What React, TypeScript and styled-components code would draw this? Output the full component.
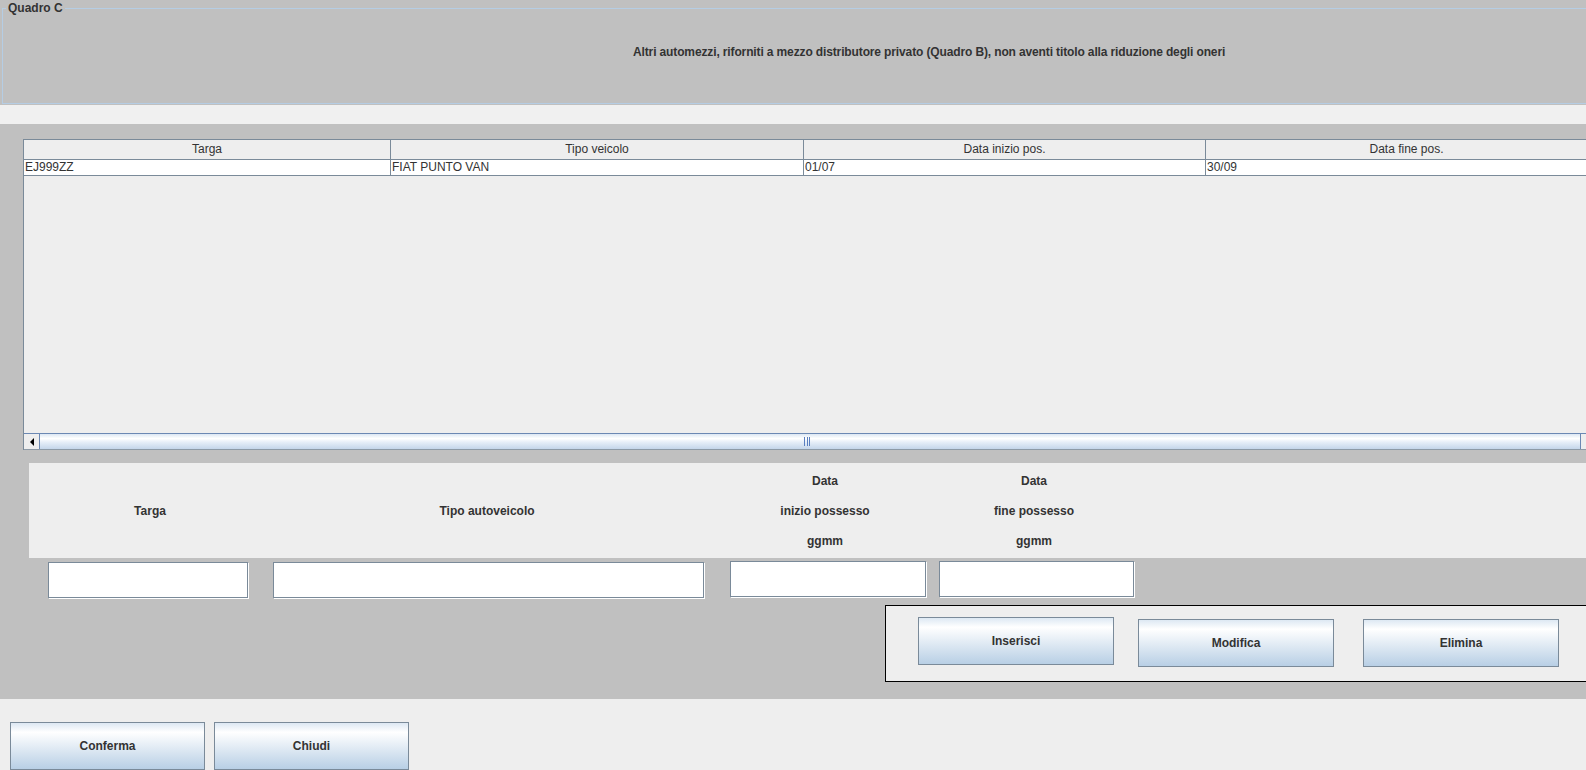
import styled, { createGlobalStyle } from "styled-components";

const GlobalStyle = createGlobalStyle`
  html, body {
    margin: 0;
    padding: 0;
    background: #c0c0c0;
    overflow: hidden;
  }
  * {
    box-sizing: border-box;
  }
`;

const FONT = `"Liberation Sans", Arial, sans-serif`;

const Window = styled.div`
  width: 1586px;
  height: 770px;
  overflow: hidden;
  display: flex;
  flex-direction: column;
  font-family: ${FONT};
  font-size: 12px;
  color: #333333;
`;

const TopPanel = styled.div`
  height: 105px;
  background: #c0c0c0;
  padding: 1px 0 0 2px;
`;

const Frame = styled.fieldset`
  margin: 0;
  padding: 0;
  height: 103px;
  width: 1620px;
  border: 1px solid #b5cde4;
  border-right: none;
`;

const Legend = styled.legend`
  font-weight: bold;
  font-size: 12px;
  line-height: 14px;
  padding: 0 2px;
  margin-left: 3px;
  color: #333333;
`;

const Subtitle = styled.div`
  font-weight: bold;
  line-height: 14px;
  padding: 30px 0 0 630px;
  letter-spacing: -0.13px;
`;

const Band = styled.div`
  height: 19px;
  background: #f0f0f0;
`;

const Main = styled.div`
  height: 575px;
  background: #c0c0c0;
  padding-top: 15px;
  display: flex;
  flex-direction: column;
`;

const TableBox = styled.div`
  margin-left: 23px;
  width: 1576px;
  height: 311px;
  border-left: 1px solid #7a8a99;
  border-top: 1px solid #7a8a99;
  background: #eeeeee;
  display: flex;
  flex-direction: column;
`;

const Grid = styled.div<{ $head?: boolean }>`
  display: grid;
  grid-template-columns: 367px 413px 402px 402px;
  height: ${(p) => (p.$head ? "20px" : "16px")};
  background: ${(p) => (p.$head ? "#eeeeee" : "#ffffff")};
  border-bottom: 1px solid #7a8a99;
`;

const Cell = styled.div<{ $head?: boolean }>`
  border-right: 1px solid #7a8a99;
  line-height: ${(p) => (p.$head ? "19px" : "15px")};
  text-align: ${(p) => (p.$head ? "center" : "left")};
  padding-left: ${(p) => (p.$head ? "0" : "1px")};
  white-space: nowrap;
  overflow: hidden;
`;

const Viewport = styled.div`
  flex: 1;
  background: #eeeeee;
`;

const ScrollBar = styled.div`
  height: 17px;
  display: flex;
  border-top: 1px solid #6b88b3;
  border-bottom: 1px solid #8d9aa6;
  background: #eeeeee;
`;

const ArrowButton = styled.div`
  width: 16px;
  display: flex;
  align-items: center;
  justify-content: center;
  background: #eeeeee;
  border-right: 1px solid #6b88b3;
`;

const Thumb = styled.div`
  flex: 1;
  margin-right: 2px;
  border-right: 1px solid #6b88b3;
  background: linear-gradient(
    to bottom,
    #dce7f3 0%,
    #ffffff 30%,
    #e6eef8 55%,
    #c4d6ea 100%
  );
  display: flex;
  align-items: center;
  justify-content: center;
  padding-right: 6px;
`;

const Grip = styled.div`
  width: 6px;
  height: 9px;
  display: flex;
  justify-content: space-between;
  & > span {
    width: 1px;
    background: #5a7fc0;
  }
`;

const LabelPanel = styled.div`
  margin: 13px 0 0 29px;
  height: 95px;
  background: #eeeeee;
  display: flex;
  align-items: center;
`;

const Label = styled.div<{ $w: number; $ml: number }>`
  width: ${(p) => p.$w}px;
  margin-left: ${(p) => p.$ml}px;
  display: flex;
  flex-direction: column;
  align-items: center;
  font-weight: bold;
  line-height: 30px;
  white-space: nowrap;
`;

const InputRow = styled.div`
  display: flex;
  align-items: flex-start;
  margin: 3px 0 0 29px;
  height: 44px;
`;

const Input = styled.input<{ $w: number; $ml: number; $top: number }>`
  width: ${(p) => p.$w}px;
  height: 36px;
  margin: ${(p) => p.$top}px 0 0 ${(p) => p.$ml}px;
  border: 1px solid #7a8a99;
  box-shadow: 1px 1px 0 #ffffff;
  background: #ffffff;
  padding: 0 3px;
  font-family: ${FONT};
  font-size: 12px;
  outline: none;
`;

const ActionPanel = styled.div`
  margin-left: 885px;
  width: 740px;
  height: 77px;
  background: #eeeeee;
  border: 1px solid #000000;
  display: flex;
  align-items: flex-start;
  padding-left: 32px;
`;

const Button = styled.button<{ $w?: number; $ml?: number; $top?: number }>`
  width: ${(p) => p.$w ?? 196}px;
  height: 48px;
  flex: none;
  margin: ${(p) => p.$top ?? 0}px 0 0 ${(p) => p.$ml ?? 0}px;
  border: 1px solid #7a8a99;
  background: linear-gradient(
    to bottom,
    #dde8f3 0%,
    #ffffff 20%,
    #b8cfe5 100%
  );
  font-family: ${FONT};
  font-size: 12px;
  font-weight: bold;
  color: #333333;
  padding: 0;
  cursor: pointer;
`;

const Footer = styled.div`
  flex: 1;
  background: #eeeeee;
  display: flex;
  align-items: flex-start;
  padding: 23px 0 0 10px;
  gap: 9px;
`;

const columns = ["Targa", "Tipo veicolo", "Data inizio pos.", "Data fine pos."];
const rows = [["EJ999ZZ", "FIAT PUNTO VAN", "01/07", "30/09"]];

const labels = [
  { lines: ["Targa"], w: 200, ml: 21 },
  { lines: ["Tipo autoveicolo"], w: 474, ml: 0 },
  { lines: ["Data", "inizio possesso", "ggmm"], w: 198, ml: 2 },
  { lines: ["Data", "fine possesso", "ggmm"], w: 198, ml: 11 },
];

const inputs = [
  { id: "targa", w: 200, ml: 19, top: 1 },
  { id: "tipo", w: 431, ml: 25, top: 1 },
  { id: "inizio", w: 196, ml: 26, top: 0 },
  { id: "fine", w: 195, ml: 13, top: 0 },
];

export default function App() {
  return (
    <>
      <GlobalStyle />
      <Window>
        <TopPanel>
          <Frame>
            <Legend>Quadro C</Legend>
            <Subtitle>
              Altri automezzi, riforniti a mezzo distributore privato (Quadro B), non aventi
              titolo alla riduzione degli oneri
            </Subtitle>
          </Frame>
        </TopPanel>
        <Band />
        <Main>
          <TableBox>
            <Grid $head>
              {columns.map((c) => (
                <Cell $head key={c}>
                  {c}
                </Cell>
              ))}
            </Grid>
            {rows.map((r, i) => (
              <Grid key={i}>
                {r.map((v, j) => (
                  <Cell key={j}>{v}</Cell>
                ))}
              </Grid>
            ))}
            <Viewport />
            <ScrollBar>
              <ArrowButton>
                <svg width="4" height="8" viewBox="0 0 4 8">
                  <path d="M4 0 L0 4 L4 8 Z" fill="#000" />
                </svg>
              </ArrowButton>
              <Thumb>
                <Grip>
                  <span />
                  <span />
                  <span />
                </Grip>
              </Thumb>
              <ArrowButton />
            </ScrollBar>
          </TableBox>

          <LabelPanel>
            {labels.map((f) => (
              <Label key={f.lines.join()} $w={f.w} $ml={f.ml}>
                {f.lines.map((l) => (
                  <span key={l}>{l}</span>
                ))}
              </Label>
            ))}
          </LabelPanel>

          <InputRow>
            {inputs.map((f) => (
              <Input key={f.id} $w={f.w} $ml={f.ml} $top={f.top} />
            ))}
          </InputRow>

          <ActionPanel>
            <Button $top={11}>Inserisci</Button>
            <Button $ml={24} $top={13}>
              Modifica
            </Button>
            <Button $ml={29} $top={13}>
              Elimina
            </Button>
          </ActionPanel>
        </Main>
        <Footer>
          <Button $w={195}>Conferma</Button>
          <Button $w={195}>Chiudi</Button>
        </Footer>
      </Window>
    </>
  );
}
